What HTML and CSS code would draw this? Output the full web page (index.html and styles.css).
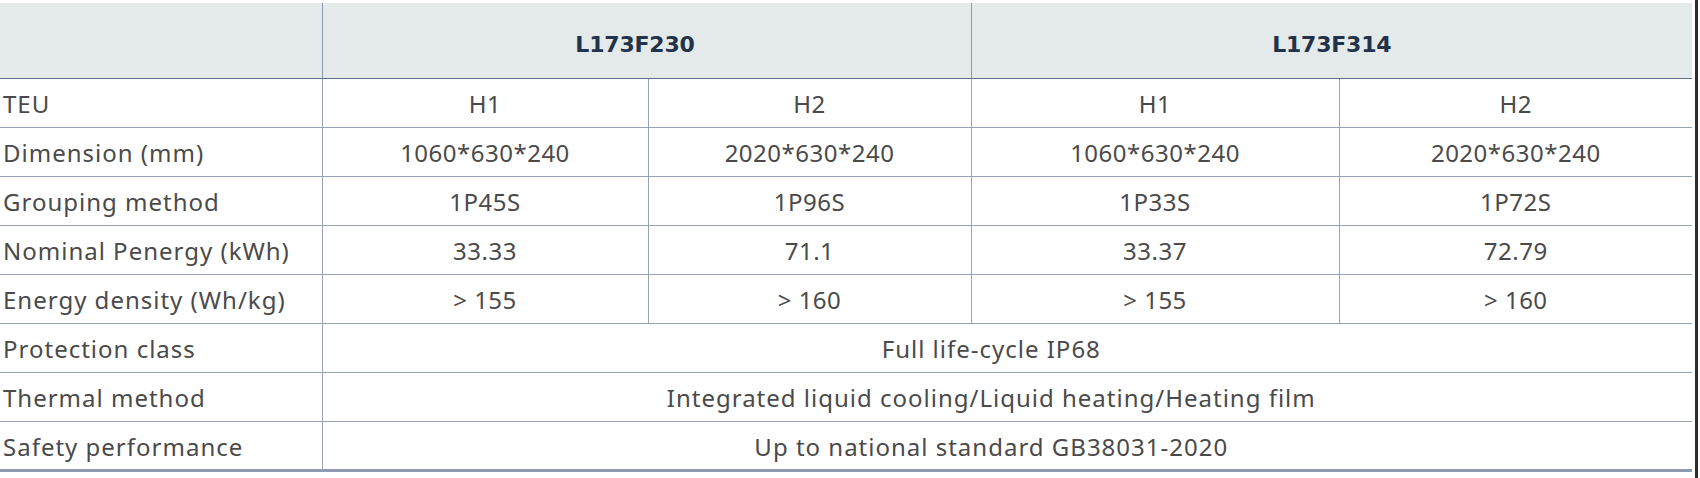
FILE: index.html
```html
<!DOCTYPE html>
<html lang="en">
<head>
<meta charset="utf-8">
<title>Battery pack specifications</title>
<link rel="stylesheet" href="styles.css">
</head>
<body>
<div class="frame">
  <table class="spec">
    <colgroup>
      <col class="c-label">
      <col class="c-a1">
      <col class="c-a2">
      <col class="c-b1">
      <col class="c-b2">
    </colgroup>
    <thead>
      <tr>
        <th class="corner"></th>
        <th colspan="2" class="group-a">L173F230</th>
        <th colspan="2" class="group-b">L173F314</th>
      </tr>
    </thead>
    <tbody>
      <tr><td class="label">TEU</td><td class="val">H1</td><td class="val">H2</td><td class="val">H1</td><td class="val">H2</td></tr>
      <tr><td class="label">Dimension (mm)</td><td class="val">1060*630*240</td><td class="val">2020*630*240</td><td class="val">1060*630*240</td><td class="val">2020*630*240</td></tr>
      <tr><td class="label">Grouping method</td><td class="val">1P45S</td><td class="val">1P96S</td><td class="val">1P33S</td><td class="val">1P72S</td></tr>
      <tr><td class="label">Nominal Penergy (kWh)</td><td class="val">33.33</td><td class="val">71.1</td><td class="val">33.37</td><td class="val">72.79</td></tr>
      <tr><td class="label">Energy density (Wh/kg)</td><td class="val">&gt; 155</td><td class="val">&gt; 160</td><td class="val">&gt; 155</td><td class="val">&gt; 160</td></tr>
      <tr><td class="label">Protection class</td><td colspan="4" class="wide">Full life-cycle IP68</td></tr>
      <tr><td class="label">Thermal method</td><td colspan="4" class="wide">Integrated liquid cooling/Liquid heating/Heating film</td></tr>
      <tr class="last"><td class="label">Safety performance</td><td colspan="4" class="wide">Up to national standard GB38031-2020</td></tr>
    </tbody>
  </table>
  <div class="edge"></div>
</div>
</body>
</html>
```

FILE: styles.css
```css
html, body {
  margin: 0;
  padding: 0;
  background: #ffffff;
}

.frame {
  display: flex;
  align-items: stretch;
  height: 478px;
  padding-top: 3px;
  box-sizing: border-box;
}

.spec {
  width: 1692px;
  border-collapse: collapse;
  table-layout: fixed;
  font-family: "Noto Sans", "Open Sans", sans-serif;
  font-size: 24px;
  letter-spacing: 1px;
  color: #4a4a4a;
  align-self: flex-start;
}

.c-label { width: 322px; }
.c-a1 { width: 326px; }
.c-a2 { width: 323px; }
.c-b1 { width: 368px; }
.c-b2 { width: 353px; }

.spec thead tr {
  height: 75px;
}

.spec thead th {
  padding: 29px 0 0 0;
  vertical-align: top;
  line-height: 26px;
  background: #e4eaea;
  color: #22324a;
  font-family: "DejaVu Sans", "Noto Sans", sans-serif;
  font-weight: 700;
  font-size: 22px;
  letter-spacing: -0.2px;
  text-align: center;
  border-left: 1px solid #8d99ae;
  border-bottom: 1px solid #5d6f8c;
}

.spec thead th.corner {
  border-left: none;
}

.spec thead th.group-a {
  padding-right: 23px;
}

.spec tbody tr {
  height: 49px;
}

.spec tbody td {
  padding: 5px 0 0 0;
  vertical-align: top;
  line-height: 40px;
  text-align: center;
  border-left: 1px solid #98a3b6;
  border-bottom: 1px solid #9aa3b5;
  white-space: nowrap;
}

.spec tbody td.val {
  letter-spacing: 0.5px;
}

.spec tbody td.wide {
  padding-right: 32px;
}

.spec tbody td.label {
  text-align: left;
  padding-left: 3px;
  border-left: none;
}

.spec tbody tr.last td {
  border-bottom: 3px solid #8e9bb1;
}

.edge {
  width: 3px;
  margin-left: 3px;
  background: #2d2d2d;
  margin-top: -3px;
}
```
